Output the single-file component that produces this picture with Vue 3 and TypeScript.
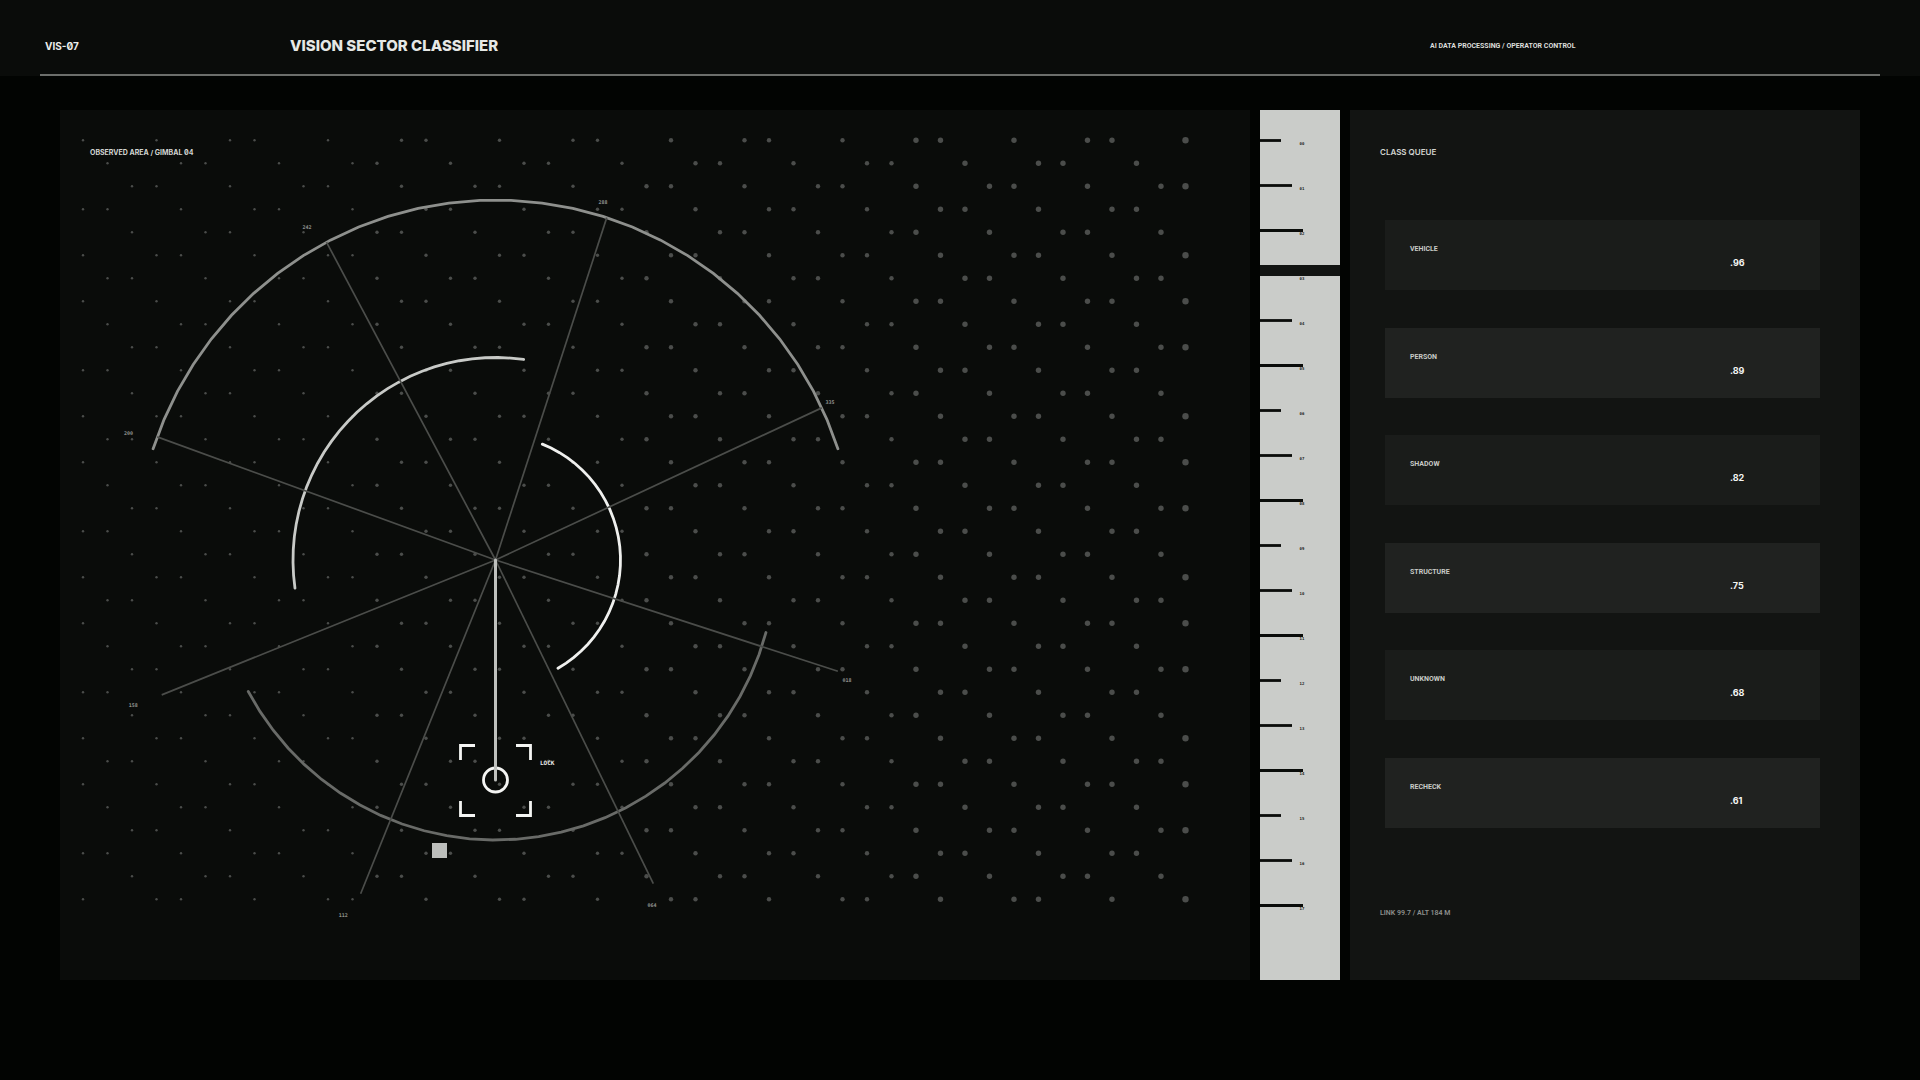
<script setup lang="ts">
interface Point { x: number; y: number }

const centre: Point = { x: 435.5, y: 450 }

function polar(radius: number, degrees: number): Point {
  const a = (degrees * Math.PI) / 180
  return { x: centre.x + radius * Math.cos(a), y: centre.y + radius * Math.sin(a) }
}

/* Sector arcs are sampled at 30 points and drawn as polylines. */
function arc(radius: number, from: number, to: number): string {
  return Array.from({ length: 30 }, (_, i) => {
    const p = polar(radius, from + ((to - from) * i) / 29)
    return `${p.x.toFixed(2)},${p.y.toFixed(2)}`
  }).join(' ')
}

const arcs = [
  { name: 'outer', points: arc(360, 198, 342) },
  { name: 'lower', points: arc(280, 15, 152) },
  { name: 'middle', points: arc(202.5, 172, 278) },
  { name: 'inner', points: arc(125, 292, 420) },
]

const rays = ['018', '064', '112', '158', '200', '242', '288', '335'].map((label) => {
  const at = polar(380, Number(label))
  return { label, end: polar(360, Number(label)), text: { x: at.x - 10, y: at.y + 5 } }
})

/* Dots grow from left to right in bands. */
const dots: { x: number; y: number; r: number }[] = []
for (let row = 0; row < 34; row++) {
  for (let col = 0; col < 46; col++) {
    if ((5 * col + 3 * row) % 7 < 3) {
      dots.push({ x: 23 + 24.5 * col, y: 30.2 + 23 * row, r: 1.2 + 0.5 * Math.floor(col / 11.25) })
    }
  }
}

/* The cursor band covers the tick at this index. */
const cursorTick = 3

const ticks = Array.from({ length: 18 }, (_, i) => ({
  label: String(i).padStart(2, '0'),
  y: 30.5 + 45 * i,
  length: 21 + 11 * (i % 3),
  covered: i === cursorTick,
}))

const queue = [
  { name: 'VEHICLE', score: '.96' },
  { name: 'PERSON', score: '.89' },
  { name: 'SHADOW', score: '.82' },
  { name: 'STRUCTURE', score: '.75' },
  { name: 'UNKNOWN', score: '.68' },
  { name: 'RECHECK', score: '.61' },
]
</script>

<template>
  <div class="screen">
    <header class="topbar">
      <span class="code">VIS-07</span>
      <h1 class="title">VISION SECTOR CLASSIFIER</h1>
      <span class="mode">AI DATA PROCESSING / OPERATOR CONTROL</span>
    </header>

    <main class="board">
      <section class="scope">
        <h2 class="caption">OBSERVED AREA / GIMBAL 04</h2>
        <svg class="plot" viewBox="0 0 1190 870" role="img" aria-label="Sector plot">
          <circle v-for="(d, i) in dots" :key="i" class="dot" :cx="d.x" :cy="d.y" :r="d.r" />
          <polyline v-for="a in arcs" :key="a.name" class="arc" :class="a.name" :points="a.points" />
          <g v-for="r in rays" :key="r.label">
            <line class="ray" :x1="centre.x" :y1="centre.y" :x2="r.end.x" :y2="r.end.y" />
            <text class="bearing" :x="r.text.x" :y="r.text.y">{{ r.label }}</text>
          </g>
          <circle class="target" cx="435.5" cy="670" r="12" />
          <line class="needle" x1="435.5" y1="450" x2="435.5" y2="670" />
          <path class="bracket" d="M400.5 650V635.5H415M456 635.5H470.5V650M400.5 691V705.5H415M456 705.5H470.5V691" />
          <text class="lock" x="480" y="655">LOCK</text>
          <rect class="marker" x="372" y="733" width="15" height="15" />
        </svg>
      </section>

      <section class="ruler">
        <svg class="scale" viewBox="0 0 80 870" role="img" aria-label="Altitude scale">
          <g v-for="t in ticks" :key="t.label">
            <line v-if="!t.covered" class="tick" x1="0" :x2="t.length" :y1="t.y" :y2="t.y" />
            <text class="mark" x="42" :y="t.y + 4.5">{{ t.label }}</text>
          </g>
          <rect class="cursor" x="0" y="155" width="80" height="11" />
        </svg>
      </section>

      <section class="side">
        <h2 class="caption queue-title">CLASS QUEUE</h2>
        <ul class="queue">
          <li v-for="item in queue" :key="item.name" class="entry">
            <span class="name">{{ item.name }}</span>
            <span class="score">{{ item.score }}</span>
          </li>
        </ul>
        <p class="status">LINK 99.7 / ALT 184 M</p>
      </section>
    </main>
  </div>
</template>

<style>
body {
  margin: 0;
  background: #020402;
}
</style>

<style scoped>
.screen {
  min-height: 100vh;
  background: #020402;
  color: #dcdedb;
  font-family: Inter, "Liberation Sans", sans-serif;
  font-feature-settings: "zero";
}

.topbar {
  position: relative;
  display: grid;
  grid-template-columns: 245fr 1140fr 450fr;
  align-items: center;
  height: 76px;
  padding: 16px 40px 0 45px;
  box-sizing: border-box;
  background: #0a0c0a;
}

.topbar::after {
  content: "";
  position: absolute;
  left: 40px;
  right: 40px;
  bottom: 0;
  height: 2px;
  background: #6c6e6b;
}

.code {
  font-size: 10px;
  font-weight: 700;
  line-height: 12px;
  color: #ecedeb;
}

.title {
  margin: 0;
  font-size: 15px;
  font-weight: 800;
  line-height: 20px;
  color: #e6e8e5;
}

.mode {
  font-family: Roboto, "Liberation Sans", sans-serif;
  font-size: 7px;
  font-weight: 700;
  line-height: 12px;
}

.board {
  display: grid;
  grid-template-columns: 1190fr 80fr 510fr;
  gap: 10px;
  padding: 34px 60px 100px;
}

.scope {
  position: relative;
  background: #0a0c0a;
}

.scope .caption {
  position: absolute;
  left: 30px;
  top: 37px;
}

.caption {
  margin: 0;
  font-size: 7px;
  font-weight: 700;
  line-height: 12px;
  color: #d2d4d1;
}

.side .queue-title {
  font-size: 8px;
  font-weight: 600;
}

.plot,
.scale {
  display: block;
  width: 100%;
  height: auto;
}

.dot {
  fill: #4b4d4b;
}

.arc {
  fill: none;
  stroke-width: 2.8;
  stroke-linecap: round;
}

.outer { stroke: #8e908d; }
.lower { stroke: #696b68; }
.middle { stroke: #c8cac7; }
.inner { stroke: #eff0ee; }

.ray {
  stroke: #4b4d4a;
  stroke-width: 1.7;
}

.bearing {
  fill: #8e908d;
  font-family: "DejaVu Sans Mono", monospace;
  font-size: 5px;
  font-weight: 700;
  text-anchor: middle;
}

.needle {
  stroke: #bfc1be;
  stroke-width: 3;
  stroke-linecap: round;
}

.target,
.bracket {
  fill: none;
  stroke: #f4f5f3;
  stroke-width: 2.8;
}

.lock {
  fill: #ecedeb;
  font-family: "DejaVu Sans Mono", monospace;
  font-size: 6px;
  font-weight: 700;
}

.marker {
  fill: #bcbebb;
}

.ruler {
  background: #caccc9;
}

.tick {
  stroke: #0a0c0a;
  stroke-width: 2.8;
}

.mark {
  fill: #222422;
  font-family: "DejaVu Sans Mono", monospace;
  font-size: 4px;
  font-weight: 700;
  text-anchor: middle;
}

.cursor {
  fill: #121412;
}

.side {
  display: flex;
  flex-direction: column;
  padding: 36px 40px 61px 30px;
  background: #121412;
}

.queue {
  display: flex;
  flex-direction: column;
  justify-content: space-between;
  height: 608px;
  margin: 62px 0 0 5px;
  padding: 0;
  list-style: none;
}

.entry {
  display: grid;
  grid-template-columns: 320fr 90fr;
  align-items: start;
  height: 70px;
  box-sizing: border-box;
  padding: 23px 0 0 25px;
  background: #1a1c1a;
}

.entry:nth-child(even) {
  background: #202220;
}

.name {
  font-family: Roboto, "Liberation Sans", sans-serif;
  font-size: 7px;
  font-weight: 700;
  line-height: 12px;
  color: #c8cac7;
}

.score {
  padding-top: 13px;
  font-size: 9px;
  font-weight: 700;
  line-height: 14px;
  color: #f4f5f3;
}

.status {
  margin: auto 0 0;
  font-family: Roboto, "Liberation Sans", sans-serif;
  font-size: 7px;
  font-weight: 600;
  line-height: 12px;
  color: #8e908d;
}
</style>
